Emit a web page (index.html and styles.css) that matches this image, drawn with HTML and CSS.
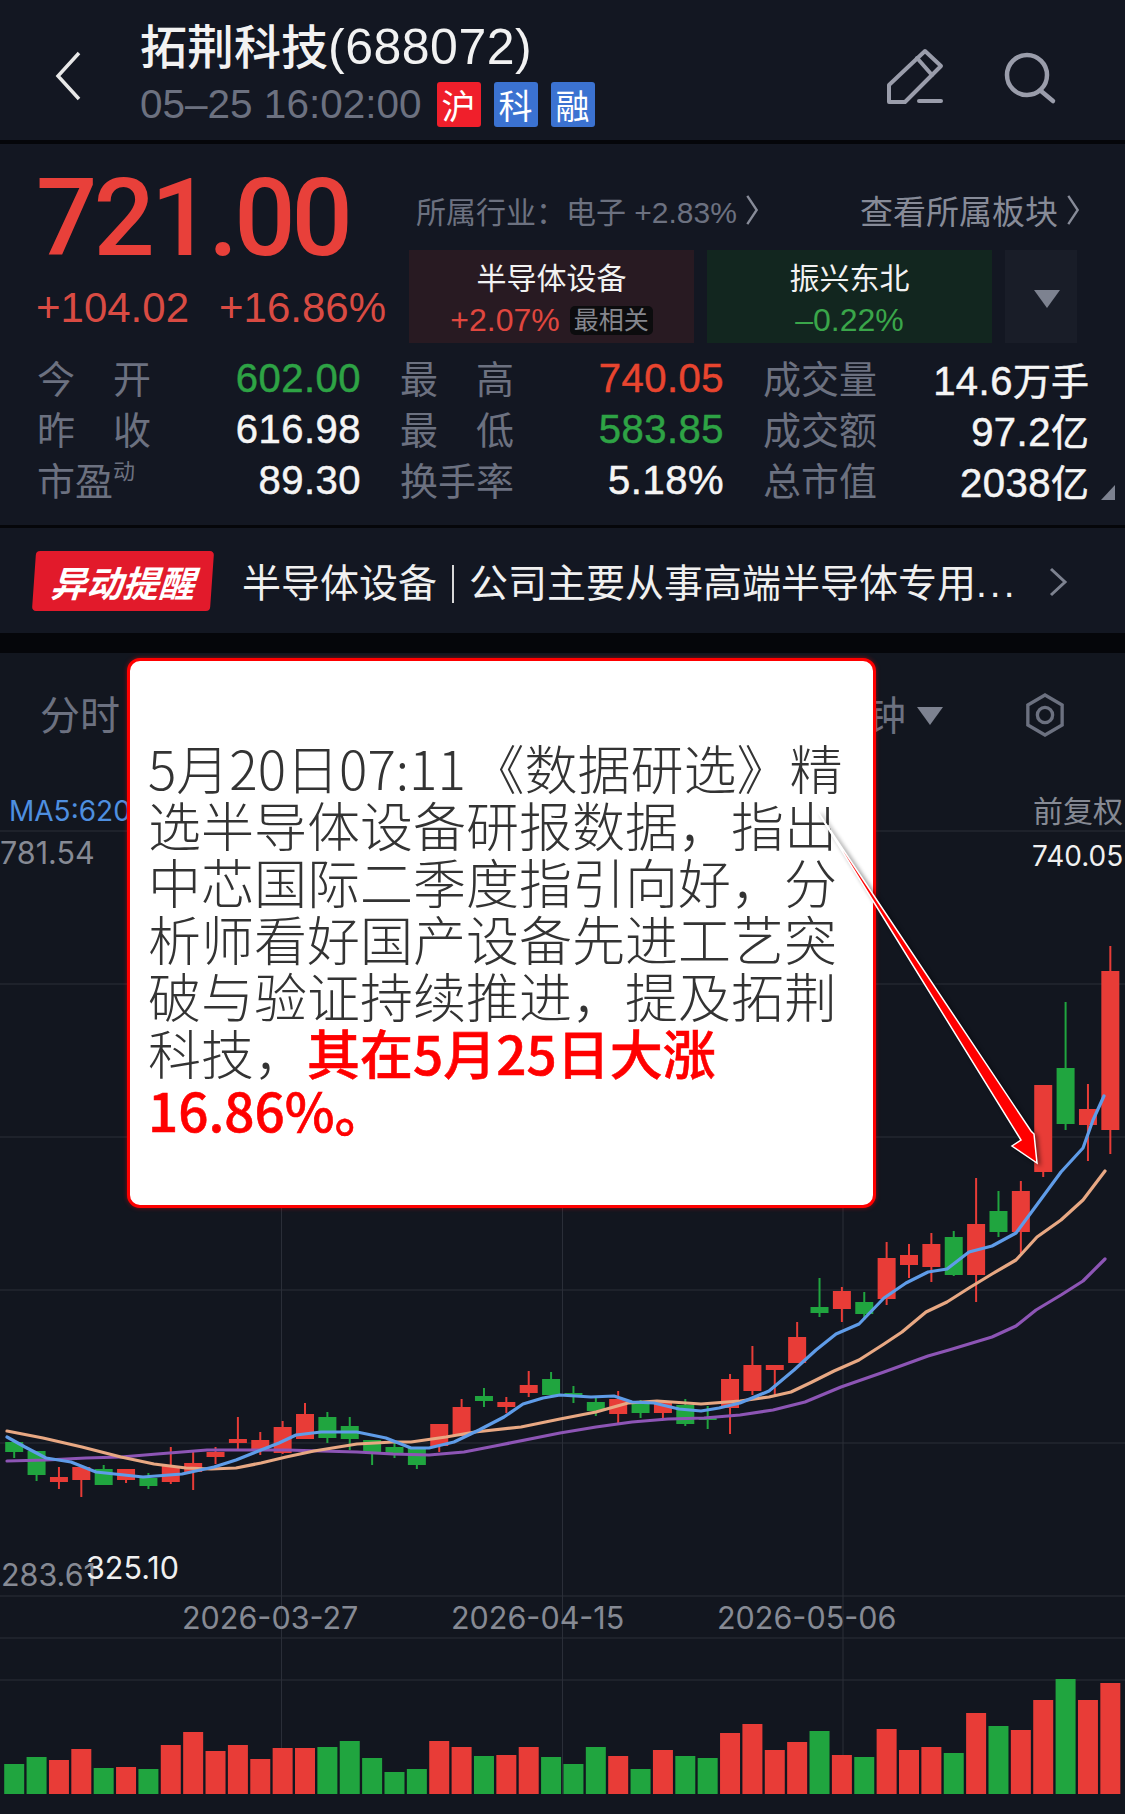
FILE: index.html
```html
<!DOCTYPE html>
<html lang="zh-CN">
<head>
    <meta charset="UTF-8">
    <title>拓荆科技(688072)</title>
    <link rel="stylesheet" href="styles.css">
</head>
<body>
    <header class="top-bar">
        <svg class="back-icon" viewBox="0 0 26 50"><path d="M24 2 L3 25 L24 48"/></svg>
        <div class="stock-info">
            <div class="stock-name">拓荆科技<span class="stock-code">(688072)</span></div>
            <div class="stock-time">
                <span class="time-text">05–25 16:02:00</span>
                <span class="tag tag-red">沪</span>
                <span class="tag tag-blue">科</span>
                <span class="tag tag-blue">融</span>
            </div>
        </div>
        <svg class="edit-icon" viewBox="0 0 58 58">
            <path d="M3 54 V37 L39 3 L55 18 L19 54 Z"/>
            <path d="M31 10 L46 27"/>
            <path d="M33 53 H55"/>
        </svg>
        <svg class="search-icon" viewBox="0 0 56 56">
            <circle cx="25" cy="25" r="20"/>
            <path d="M39 41 L51 51"/>
        </svg>
    </header>

    <section class="quote">
        <div class="quote-top">
            <div class="price-box">
                <div class="price">721.00</div>
                <div class="change">
                    <span>+104.02</span>
                    <span>+16.86%</span>
                </div>
            </div>
            <div class="board-box">
                <div class="board-links">
                    <span class="industry">所属行业：电子 +2.83%<svg class="small-chevron" viewBox="0 0 14 34"><path d="M2 2 L12 17 L2 32"/></svg></span>
                    <span class="view-boards">查看所属板块<svg class="small-chevron" viewBox="0 0 14 34"><path d="M2 2 L12 17 L2 32"/></svg></span>
                </div>
                <div class="board-cards">
                    <div class="board-card card-up">
                        <div class="card-name">半导体设备</div>
                        <div class="card-change"><span class="up-text">+2.07%</span><span class="badge">最相关</span></div>
                    </div>
                    <div class="board-card card-down">
                        <div class="card-name">振兴东北</div>
                        <div class="card-change"><span class="down-text">–0.22%</span></div>
                    </div>
                    <div class="board-card card-more"><span class="down-arrow"></span></div>
                </div>
            </div>
        </div>

        <div class="stats">
            <div class="stat-col">
                <div class="stat-row"><span class="stat-label"><span>今</span><span>开</span></span><span class="stat-value green">602.00</span></div>
                <div class="stat-row"><span class="stat-label"><span>昨</span><span>收</span></span><span class="stat-value">616.98</span></div>
                <div class="stat-row"><span class="stat-label"><span>市盈<sup>动</sup></span></span><span class="stat-value">89.30</span></div>
            </div>
            <div class="stat-col">
                <div class="stat-row"><span class="stat-label"><span>最</span><span>高</span></span><span class="stat-value red">740.05</span></div>
                <div class="stat-row"><span class="stat-label"><span>最</span><span>低</span></span><span class="stat-value green">583.85</span></div>
                <div class="stat-row"><span class="stat-label">换手率</span><span class="stat-value">5.18%</span></div>
            </div>
            <div class="stat-col stat-col-wide">
                <div class="stat-row"><span class="stat-label">成交量</span><span class="stat-value">14.6<span class="unit">万手</span></span></div>
                <div class="stat-row"><span class="stat-label">成交额</span><span class="stat-value">97.2<span class="unit">亿</span></span></div>
                <div class="stat-row"><span class="stat-label">总市值</span><span class="stat-value">2038<span class="unit">亿</span></span></div>
            </div>
        </div>
        <span class="corner-mark"></span>
    </section>

    <section class="alert-bar">
        <span class="alert-tag"><span>异动提醒</span></span>
        <span class="alert-text">半导体设备<i class="alert-sep"></i>公司主要从事高端半导体专用<b>...</b></span>
        <svg class="alert-chevron" viewBox="0 0 20 30"><path d="M3 2 L17 15 L3 28"/></svg>
    </section>

    <section class="chart">
        <div class="chart-tabs">
            <span class="tab">分时</span>
            <span class="tab tab-period">分钟<span class="tab-arrow"></span></span>
            <svg class="gear-icon" viewBox="0 0 42 46">
                <path d="M21 2 L39 12.5 V33.5 L21 44 L3 33.5 V12.5 Z"/>
                <circle cx="21" cy="23" r="8"/>
            </svg>
        </div>

        <svg class="kline" viewBox="0 770 1125 1044">
            <g class="grid">
                <path d="M0 831 H1125 M0 984 H1125 M0 1137 H1125 M0 1290 H1125 M0 1443 H1125 M0 1596 H1125 M0 1638 H1125 M0 1680 H1125"/>
                <path d="M281.5 831 V1794 M562.5 831 V1794 M843 831 V1794"/>
            </g>
            <g id="candles"></g>
            <g id="maLines"></g>
            <g id="volume"></g>
            <text class="label label-blue" x="9" y="821">MA5:620.18</text>
            <text class="label label-wide" x="0" y="864">781.54</text>
            <text class="label label-cjk" x="1033" y="822">前复权</text>
            <text class="label label-white" x="1032" y="866">740.05</text>
            <text class="label label-wide" x="1" y="1586">283.61</text>
            <text class="label label-wide label-white" x="86" y="1579">325.10</text>
            <text class="label label-date" x="182" y="1629">2026-03-27</text>
            <text class="label label-date" x="451" y="1629">2026-04-15</text>
            <text class="label label-date" x="717" y="1629">2026-05-06</text>
        </svg>

        <div class="callout">
            <p>5月20日07:11 《数据研选》精<br>选半导体设备研报数据，指出<br>中芯国际二季度指引向好，分<br>析师看好国产设备先进工艺突<br>破与验证持续推进，提及拓荆<br>科技，<strong>其在5月25日大涨<br>16.86%。</strong></p>
        </div>

        <!-- annotation arrow from the note down to the candle -->
        <svg class="arrow-layer" viewBox="0 653 1125 1161">
            <polygon points="818,812 1031,1131 1034,1134 1037,1163 1012,1146 1021,1140"/>
        </svg>
    </section>

    <script src="chart.js"></script>
</body>
</html>
```

FILE: styles.css
```css
* {
    box-sizing: border-box;
}
body {
    margin: 0;
    width: 1125px;
    height: 1814px;
    overflow: hidden;
    background: #05060a;
    color: #f2f2f2;
    font-family: "Liberation Sans", "Noto Sans CJK SC", sans-serif;
}
svg path, svg circle {
    fill: none;
}

/* top bar */
.top-bar {
    position: relative;
    display: flex;
    height: 144px;
    background: #131722;
    border-bottom: 4px solid #05060a;
}
.back-icon {
    width: 26px;
    height: 50px;
    margin: 51px 0 0 55px;
    stroke: #e8e8e8;
    stroke-width: 3.5;
}
.back-icon path {
    stroke: #e8e8e8;
}
.stock-info {
    width: 456px;
    margin-left: 59px;
    padding-top: 19px;
}
.stock-name {
    font-size: 47px;
    line-height: 56px;
    font-weight: 500;
    white-space: nowrap;
}
.stock-code {
    font-size: 50px;
    letter-spacing: 0.5px;
}
.stock-time {
    display: flex;
    align-items: center;
    height: 48px;
    margin-top: 4px;
    font-size: 40.5px;
    color: #6c7180;
}
.time-text {
    white-space: nowrap;
}
.tag {
    display: flex;
    flex-shrink: 0;
    align-items: center;
    justify-content: center;
    width: 44px;
    height: 45px;
    margin-left: 13px;
    border-radius: 3px;
    color: #fff;
    font-size: 34px;
}
.tag-red {
    margin-left: 15px;
    background: #f01f2b;
}
.tag-blue {
    background: #3b72d1;
}
.edit-icon {
    width: 58px;
    height: 58px;
    margin: 48px 0 0 290px;
}
.edit-icon path, .search-icon path, .search-icon circle {
    stroke: #9a9dab;
    stroke-width: 4;
    stroke-linejoin: round;
    stroke-linecap: round;
}
.search-icon {
    width: 56px;
    height: 56px;
    margin: 50px 0 0 58px;
}
.search-icon path, .search-icon circle {
    stroke-width: 4.5;
}

/* price block */
.quote {
    position: relative;
    height: 384px;
    background: #131722;
    border-bottom: 3px solid #05060a;
}
.quote-top {
    display: flex;
}
.price-box {
    width: 409px;
    padding-left: 37px;
}
.price {
    margin-top: 24px;
    margin-left: -1px;
    font-family: Roboto, sans-serif;
    font-size: 108px;
    font-weight: 500;
    line-height: 100px;
    letter-spacing: -4px;
    color: #e8403a;
}
.change {
    display: flex;
    gap: 30px;
    margin-top: 15px;
    margin-left: -1px;
    font-size: 42px;
    line-height: 50px;
    color: #d94b43;
    white-space: nowrap;
}
.board-box {
    width: 716px;
    padding-top: 46px;
}
.board-links {
    display: flex;
    justify-content: space-between;
    align-items: center;
    height: 40px;
    margin: 0 45px 20px 7px;
}
.industry {
    display: flex;
    align-items: center;
    font-size: 30px;
    color: #6c7180;
    white-space: nowrap;
}
.view-boards {
    display: flex;
    align-items: center;
    font-size: 33px;
    color: #878b98;
}
.small-chevron {
    width: 14px;
    height: 32px;
    margin-left: 8px;
}
.small-chevron path {
    stroke: #878b98;
    stroke-width: 2.5;
}
.board-cards {
    display: flex;
    gap: 13px;
    height: 93px;
}
.board-card {
    width: 285px;
    text-align: center;
}
.card-up {
    background: #281a22;
}
.card-down {
    background: #12261f;
}
.card-more {
    display: flex;
    align-items: center;
    justify-content: center;
    width: 72px;
    padding: 4px 0 0 12px;
    background: #191d28;
}
.down-arrow {
    width: 0;
    height: 0;
    border-left: 13px solid transparent;
    border-right: 13px solid transparent;
    border-top: 18px solid #7d8290;
}
.card-name {
    margin-top: 9px;
    font-size: 30px;
    line-height: 40px;
}
.card-change {
    display: flex;
    justify-content: center;
    align-items: center;
    margin-top: 1px;
    font-size: 32px;
    line-height: 40px;
}
.up-text {
    color: #e0473f;
}
.down-text {
    color: #3aa64a;
}
.badge {
    margin-left: 10px;
    padding: 0 4px;
    height: 29px;
    border-radius: 5px;
    background: #0c0c0e;
    color: #85878d;
    font-size: 25px;
    line-height: 29px;
}
.stats {
    display: flex;
    gap: 39px;
    margin-top: 10px;
    padding-left: 37px;
}
.stat-col {
    width: 324px;
}
.stat-col-wide {
    width: 326px;
}
.stat-row {
    display: flex;
    justify-content: space-between;
    align-items: center;
    height: 51px;
}
.stat-label {
    display: flex;
    justify-content: space-between;
    width: 114px;
    margin-top: -4px;
    font-size: 38px;
    color: #6c7180;
    white-space: nowrap;
}
.stat-label sup {
    font-size: 22px;
    line-height: 0;
    vertical-align: 16px;
}
.stat-value {
    font-size: 40px;
    letter-spacing: 0.5px;
    color: #f5f5f5;
    -webkit-text-stroke: 0.5px currentColor;
}
.unit {
    font-size: 38px;
    letter-spacing: 0;
}
.green {
    color: #2ea345;
}
.red {
    color: #e8452f;
}
.corner-mark {
    position: absolute;
    right: 10px;
    top: 341px;
    width: 0;
    height: 0;
    border-left: 14px solid transparent;
    border-bottom: 15px solid #7d8290;
}

/* alert strip */
.alert-bar {
    display: flex;
    align-items: center;
    height: 105px;
    padding-left: 34px;
    margin-bottom: 20px;
    background: #131722;
}
.alert-tag {
    display: flex;
    align-items: center;
    justify-content: center;
    width: 178px;
    height: 60px;
    border-radius: 4px;
    background: #e21a2b;
    transform: skewX(-4deg);
}
.alert-tag span {
    font-size: 36px;
    font-weight: 700;
    font-style: italic;
    color: #fff;
}
.alert-text {
    margin-left: 30px;
    margin-top: -2px;
    font-size: 39px;
    color: #f0f0f0;
    white-space: nowrap;
}
.alert-text b {
    font-weight: 400;
    letter-spacing: 3px;
}
.alert-sep {
    display: inline-block;
    width: 2px;
    height: 38px;
    margin: 0 15px;
    vertical-align: -6px;
    background: #d8d8d8;
}
.alert-chevron {
    width: 20px;
    height: 30px;
    margin: 3px 0 0 30px;
}
.alert-chevron path {
    stroke: #7d8290;
    stroke-width: 3;
}

/* chart */
.chart {
    position: relative;
    height: 1161px;
    background: #12161f;
}
.chart-tabs {
    position: relative;
    display: flex;
    height: 117px;
    padding: 38px 0 0 40px;
}
.tab {
    height: 50px;
    font-size: 40px;
    line-height: 50px;
    color: #6c7180;
}
.tab-period {
    display: flex;
    align-items: center;
    margin-left: 706px;
}
.tab-arrow {
    width: 0;
    height: 0;
    margin-left: 11px;
    border-left: 13px solid transparent;
    border-right: 13px solid transparent;
    border-top: 18px solid #7d8290;
}
.gear-icon {
    width: 40px;
    height: 44px;
    margin: 2px 0 0 82px;
}
.gear-icon path, .gear-icon circle {
    stroke: #6c7180;
    stroke-width: 3.5;
}
.kline {
    display: block;
    width: 1125px;
    height: 1044px;
}
.grid path {
    stroke: #2a2e38;
    stroke-width: 1;
}
.label {
    font-family: Inter, sans-serif;
    font-size: 28px;
    fill: #868a94;
}
.label-wide {
    font-size: 30.5px;
}
.label-date {
    font-size: 30.5px;
}
.label-cjk {
    font-size: 30px;
}
.label-blue {
    fill: #4e8fe0;
}
.label-white {
    fill: #f0f0f0;
}
.candle-up {
    fill: #e83c37;
    stroke: #e83c37;
}
.candle-down {
    fill: #20a53f;
    stroke: #20a53f;
}
.wick {
    stroke-width: 2;
}
.ma-line {
    fill: none;
    stroke-width: 3.2;
    stroke-linejoin: round;
    stroke-linecap: round;
}
.ma5 {
    stroke: #5f9ce8;
}
.ma10 {
    stroke: #e8a883;
}
.ma20 {
    stroke: #8d55b5;
}

/* white note over the chart */
.callout {
    position: absolute;
    left: 127px;
    top: 5px;
    width: 749px;
    height: 550px;
    padding: 78px 0 0 18px;
    border: 3px solid #f00;
    border-radius: 13px;
    background: #fff;
    box-shadow: 0 0 4px rgba(255, 0, 0, 0.5);
}
.callout p {
    margin: 0;
    font-family: "Noto Sans CJK SC", sans-serif;
    font-size: 53px;
    font-weight: 300;
    line-height: 57px;
    word-spacing: -6px;
    color: #333;
    white-space: nowrap;
}
.callout strong {
    font-weight: 500;
    color: #f00;
    -webkit-text-stroke: 0.6px #f00;
}
.arrow-layer {
    position: absolute;
    left: 0;
    top: 0;
    width: 1125px;
    height: 1161px;
    pointer-events: none;
}
.arrow-layer polygon {
    fill: #f00;
    stroke: #fff;
    stroke-width: 1.5;
    filter: drop-shadow(3px 2px 2px rgba(0, 0, 0, 0.45));
}
```

FILE: chart.js
```js
// daily bars: [up, bodyTop, bodyBottom, high, low, volumeHeight], all in page pixels
const bars = [
    [0, 1442, 1452, 1442, 1458, 30], [0, 1451, 1475, 1451, 1481, 37],
    [1, 1477, 1482, 1467, 1489, 34], [1, 1467, 1480, 1467, 1497, 45],
    [0, 1469, 1485, 1465, 1485, 26], [1, 1469, 1480, 1469, 1483, 27],
    [0, 1478, 1486, 1473, 1489, 25], [1, 1466, 1482, 1447, 1484, 49],
    [1, 1463, 1472, 1452, 1490, 62], [1, 1452, 1457, 1447, 1464, 43],
    [1, 1439, 1443, 1417, 1449, 49], [1, 1440, 1449, 1432, 1455, 35],
    [1, 1427, 1453, 1421, 1454, 46], [1, 1414, 1439, 1403, 1439, 46],
    [0, 1417, 1438, 1412, 1443, 47], [0, 1426, 1439, 1417, 1450, 53],
    [0, 1440, 1452, 1440, 1465, 36], [0, 1447, 1454, 1442, 1458, 22],
    [0, 1448, 1465, 1448, 1469, 25], [1, 1424, 1446, 1424, 1452, 53],
    [1, 1407, 1436, 1399, 1436, 47], [0, 1396, 1401, 1388, 1407, 38],
    [1, 1402, 1407, 1397, 1413, 39], [1, 1385, 1393, 1371, 1397, 47],
    [0, 1379, 1395, 1372, 1395, 37], [0, 1393, 1395, 1386, 1403, 30],
    [0, 1402, 1411, 1398, 1416, 47], [1, 1399, 1414, 1391, 1423, 38],
    [0, 1403, 1413, 1400, 1418, 25], [1, 1402, 1413, 1400, 1419, 44],
    [0, 1405, 1424, 1399, 1426, 38], [0, 1417, 1420, 1406, 1429, 36],
    [1, 1379, 1408, 1374, 1434, 61], [1, 1365, 1391, 1346, 1395, 70],
    [1, 1365, 1370, 1365, 1395, 44], [1, 1337, 1363, 1322, 1363, 52],
    [0, 1307, 1313, 1278, 1317, 63], [1, 1291, 1309, 1287, 1322, 39],
    [0, 1302, 1314, 1292, 1320, 37], [1, 1258, 1299, 1242, 1305, 65],
    [1, 1255, 1265, 1244, 1278, 44], [1, 1244, 1267, 1233, 1282, 47],
    [0, 1237, 1275, 1231, 1276, 41], [1, 1224, 1275, 1178, 1302, 81],
    [0, 1211, 1232, 1191, 1237, 68], [1, 1191, 1232, 1181, 1253, 64],
    [1, 1085, 1172, 1085, 1177, 94], [0, 1068, 1124, 1002, 1130, 115],
    [1, 1109, 1125, 1084, 1161, 94], [1, 971, 1130, 946, 1154, 111]
];

const ma5 = '7,1437 25,1447 46,1458 71,1462 96,1472 143,1477 182,1474 214,1467 236,1460 261,1450 279,1443 296,1435 321,1432 357,1432 386,1438 411,1448 429,1448 454,1442 479,1430 504,1417 523,1404 543,1398 560,1395 591,1397 614,1396 632,1402 654,1403 679,1409 701,1411 719,1408 740,1403 769,1391 794,1370 816,1350 836,1334 859,1324 884,1298 906,1283 928,1272 947,1269 969,1252 992,1246 1016,1233 1036,1206 1061,1172 1083,1148 1093,1120 1104,1096';
const ma10 = '7,1431 43,1438 82,1447 121,1457 154,1464 186,1468 211,1469 236,1468 261,1463 286,1457 314,1451 357,1444 393,1442 411,1442 446,1437 475,1432 521,1427 560,1419 596,1412 628,1403 657,1401 701,1404 740,1401 769,1397 791,1392 812,1382 834,1371 859,1360 884,1344 902,1332 926,1312 947,1302 969,1288 992,1274 1016,1260 1037,1237 1061,1220 1083,1200 1105,1171';
const ma20 = '7,1461 46,1460 86,1458 121,1457 157,1454 207,1450 250,1450 286,1450 321,1451 357,1452 393,1454 429,1455 464,1452 500,1445 560,1433 596,1427 632,1422 668,1419 704,1418 740,1415 773,1410 805,1402 841,1387 884,1372 928,1356 949,1350 992,1337 1016,1326 1036,1310 1061,1295 1083,1281 1105,1259';

const SVG_NS = 'http://www.w3.org/2000/svg';
const BAR_PITCH = 22.37;
const BAR_WIDTH = 19;
const VOLUME_BASE = 1794;

function addShape(parent, tag, attrs) {
    const el = document.createElementNS(SVG_NS, tag);
    Object.keys(attrs).forEach(key => el.setAttribute(key, attrs[key]));
    parent.appendChild(el);
}

const candles = document.getElementById('candles');
const volume = document.getElementById('volume');
const maLines = document.getElementById('maLines');

bars.forEach((bar, i) => {
    const [up, top, bottom, high, low, vol] = bar;
    const x = 14.2 + BAR_PITCH * i;
    const cls = up ? 'candle-up' : 'candle-down';
    addShape(candles, 'line', { class: cls + ' wick', x1: x, x2: x, y1: high, y2: low });
    addShape(candles, 'rect', { class: cls, 'stroke-width': 0, x: x - BAR_WIDTH / 2 + 0.5, y: top, width: BAR_WIDTH - 1, height: bottom - top });
    addShape(volume, 'rect', { class: cls, 'stroke-width': 0, x: x - BAR_WIDTH / 2 - 0.5, y: VOLUME_BASE - vol, width: BAR_WIDTH + 1, height: vol });
});

[['ma20', ma20], ['ma10', ma10], ['ma5', ma5]].forEach(([name, points]) => {
    addShape(maLines, 'polyline', { class: 'ma-line ' + name, points: points });
});
```
